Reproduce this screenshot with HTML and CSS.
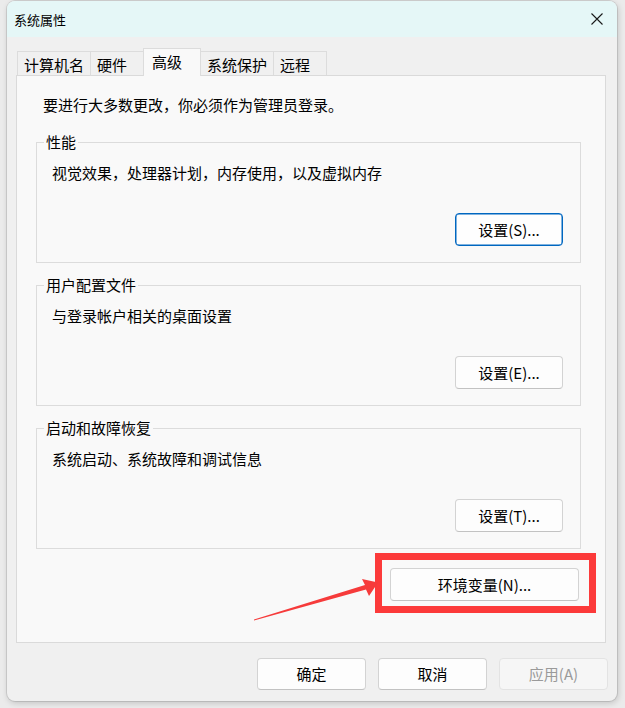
FILE: index.html
```html
<!DOCTYPE html>
<html lang="zh-CN">
<head>
<meta charset="utf-8">
<title>系统属性</title>
<link rel="stylesheet" href="styles.css">
</head>
<body>
<div class="dialog">
  <div class="titlebar">
    <span class="title">系统属性</span>
    <svg class="close" width="12" height="12" viewBox="0 0 12 12"><path d="M0.5 0.5 L11.5 11.5 M11.5 0.5 L0.5 11.5" stroke="#1a1a1a" stroke-width="1.1" fill="none"/></svg>
  </div>
  <div class="tabs">
    <div class="tab first">计算机名</div>
    <div class="tab">硬件</div>
    <div class="tab active">高级</div>
    <div class="tab">系统保护</div>
    <div class="tab">远程</div>
  </div>
  <div class="panel">
    <p class="intro">要进行大多数更改，你必须作为管理员登录。</p>
    <fieldset class="group first-group">
      <legend>性能</legend>
      <p class="desc">视觉效果，处理器计划，内存使用，以及虚拟内存</p>
      <div class="actions"><button class="btn focused">设置(S)...</button></div>
    </fieldset>
    <fieldset class="group">
      <legend>用户配置文件</legend>
      <p class="desc">与登录帐户相关的桌面设置</p>
      <div class="actions"><button class="btn">设置(E)...</button></div>
    </fieldset>
    <fieldset class="group">
      <legend>启动和故障恢复</legend>
      <p class="desc">系统启动、系统故障和调试信息</p>
      <div class="actions"><button class="btn">设置(T)...</button></div>
    </fieldset>
    <button class="btn env">环境变量(N)...</button>
  </div>
  <div class="footer">
    <button class="btn foot">确定</button>
    <button class="btn foot">取消</button>
    <button class="btn foot disabled">应用(A)</button>
  </div>
</div>
<div class="highlight"></div>
<svg class="arrow" width="625" height="708" viewBox="0 0 625 708">
  <polygon points="254,619.5 365,585 362,579 378,582.5 369,596 366,589.5 254,620.5" fill="#f63b3b"/>
</svg>
</body>
</html>
```
FILE: styles.css
```css
* { box-sizing: border-box; }
html, body { margin: 0; padding: 0; }
body {
  width: 625px;
  height: 708px;
  overflow: hidden;
  position: relative;
  background: #ebebeb;
  font-family: "Noto Sans CJK SC", "Noto Sans", sans-serif;
  font-size: 15px;
  color: #000;
}
.dialog {
  margin: 1px 0 0 7px;
  width: 610px;
  height: 700px;
  background: #f0f0f0;
  border-radius: 8px;
  overflow: hidden;
  box-shadow: 0 0 0 1px rgba(0,0,0,0.10), 1px 2px 6px rgba(0,0,0,0.18);
  display: flex;
  flex-direction: column;
}
.titlebar {
  flex: none;
  height: 36px;
  background: #e5f7f7;
  display: flex;
  align-items: center;
  justify-content: space-between;
  padding: 0 14px 0 7px;
  font-size: 13px;
}
.close { display: block; }
.tabs {
  flex: none;
  display: flex;
  align-items: flex-end;
  height: 27px;
  margin: 11px 0 0 10px;
}
.tab {
  height: 24px;
  line-height: 25px;
  min-width: 54px;
  padding: 0 6px;
  border: 1px solid #dcdcdc;
  border-bottom: none;
  margin-left: -1px;
  background: #f0f0f0;
  white-space: nowrap;
}
.tab.first { margin-left: 0; }
.tab.active {
  height: 28px;
  line-height: 26px;
  min-width: 58px;
  padding: 0 8px;
  margin-bottom: -1px;
  background: #f9f9f9;
  position: relative;
  z-index: 1;
}
.panel {
  flex: none;
  margin: 0 11px 0 9px;
  height: 568px;
  background: #f9f9f9;
  border: 1px solid #dadada;
  padding: 19px 24px 0 19px;
  display: flex;
  flex-direction: column;
}
.intro {
  margin: 0 0 0 7px;
  line-height: 20px;
}
.group {
  margin: 11px 0 0 0;
  border: 1px solid #dcdcdc;
  padding: 10px 17px 16px 7px;
  min-width: 0;
  display: flex;
  flex-direction: column;
}
.group.first-group { margin-top: 16px; }
.group legend {
  padding: 0 2px;
  line-height: 22px;
}
.desc {
  margin: 0 0 0 8px;
  line-height: 20px;
}
.actions {
  margin-top: 30px;
  display: flex;
  justify-content: flex-end;
}
.btn {
  font-family: inherit;
  font-size: 15px;
  color: #000;
  background: #fdfdfd;
  border: 1px solid #d3d3d3;
  border-bottom-color: #c2c2c2;
  border-radius: 4px;
  width: 108px;
  height: 33px;
  padding: 0;
  line-height: 31px;
  text-align: center;
}
.btn.focused {
  background: #fefefe;
  border: 1px solid #0067c0;
  box-shadow: inset 0 0 0 0.5px #0067c0;
}
.btn.env {
  width: 189px;
  align-self: flex-end;
  margin: 19px 2px 0 0;
}
.footer {
  flex: none;
  display: flex;
  justify-content: flex-end;
  gap: 12px;
  margin-top: 15px;
  padding-right: 9px;
}
.btn.foot {
  width: 109px;
  height: 32px;
  line-height: 30px;
}
.btn.disabled {
  background: #f6f6f6;
  border-color: #e3e3e3;
  color: #9a9a9a;
}
.highlight {
  position: absolute;
  left: 375px;
  top: 553px;
  width: 221px;
  height: 60px;
  border: 7px solid #fc3a3a;
}
.arrow {
  position: absolute;
  left: 0;
  top: 0;
  pointer-events: none;
}
```
